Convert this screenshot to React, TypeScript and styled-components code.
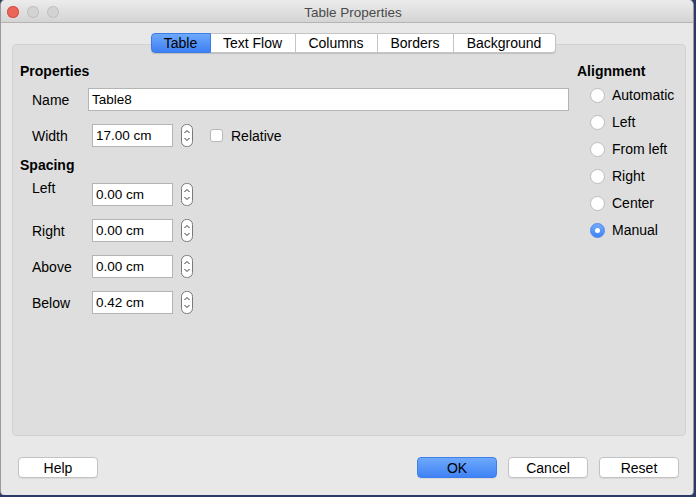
import styled, { createGlobalStyle, css } from "styled-components";

const GlobalStyle = createGlobalStyle`
    html, body {
        margin: 0;
        padding: 0;
        background: #2b3a68;
        font-family: "Liberation Sans", Arial, sans-serif;
        font-size: 14px;
        color: #000;
    }
`;

const Window = styled.div`
    width: 692px;
    height: 495px;
    margin-left: 1px;
    background: #e8e8e8;
    border-radius: 5px 5px 4px 4px;
    display: flex;
    flex-direction: column;
    overflow: hidden;
    box-shadow: 0 0 0 1px #9a9a9a;
`;

const TitleBar = styled.div`
    height: 23px;
    flex-shrink: 0;
    box-sizing: border-box;
    background: linear-gradient(#ececec, #d4d4d4);
    border-bottom: 1px solid #b4b4b4;
    display: flex;
    align-items: center;
    padding: 1px 0 0 6px;
`;

const Lights = styled.div`
    display: flex;
    gap: 8px;
`;

const Light = styled.span<{ $color: string; $edge: string }>`
    width: 12px;
    height: 12px;
    border-radius: 50%;
    background: ${(p) => p.$color};
    box-shadow: inset 0 0 0 1px ${(p) => p.$edge};
`;

const Title = styled.div`
    flex: 1;
    text-align: center;
    margin: 2px 46px 0 0;
    color: #4a4a4a;
    font-size: 13.5px;
`;

const Tabs = styled.div`
    display: flex;
    align-self: center;
    margin-top: 10px;
    margin-left: 12px;
    height: 20px;
    position: relative;
    z-index: 1;
    border-radius: 4px;
    box-shadow: 0 1px 1px rgba(0, 0, 0, 0.15);
`;

const Tab = styled.div<{ $active?: boolean; $width: number }>`
    width: ${(p) => p.$width}px;
    box-sizing: border-box;
    display: flex;
    align-items: center;
    justify-content: center;
    background: #fff;
    border: 1px solid #c4c4c4;
    border-left: none;
    &:first-child {
        border-left: 1px solid #c4c4c4;
        border-radius: 4px 0 0 4px;
    }
    &:last-child {
        border-radius: 0 4px 4px 0;
    }
    ${(p) =>
        p.$active &&
        css`
            background: linear-gradient(#6ea9fb, #3d80f4);
            border-color: #3d7bea !important;
        `}
`;

const Panel = styled.div`
    margin: -9px 7px 0 11px;
    height: 392px;
    box-sizing: border-box;
    background: #dedede;
    border: 1px solid #d2d2d2;
    border-radius: 4px;
    padding: 18px 0 0 7px;
    display: grid;
    grid-template-columns: 549px 1fr;
    column-gap: 8px;
`;

const Column = styled.div`
    display: flex;
    flex-direction: column;
`;

const Heading = styled.div<{ $mt?: number }>`
    font-weight: bold;
    line-height: 17px;
    margin-top: ${(p) => p.$mt ?? 0}px;
`;

const Row = styled.div<{ $mt: number }>`
    display: flex;
    align-items: center;
    margin-top: ${(p) => p.$mt}px;
    padding-left: 12px;
`;

const Label = styled.span<{ $width: number; $raise?: boolean }>`
    width: ${(p) => p.$width}px;
    flex-shrink: 0;
    ${(p) =>
        p.$raise &&
        css`
            align-self: flex-start;
            line-height: 10px;
        `}
`;

const Input = styled.div<{ $width?: number }>`
    height: 23px;
    box-sizing: border-box;
    ${(p) => (p.$width ? `width: ${p.$width}px;` : "flex: 1;")}
    background: #fff;
    border: 1px solid #b4b4b4;
    display: flex;
    align-items: center;
    padding-left: 3px;
    font-size: 13.5px;
`;

const SpinBox = styled.div`
    width: 12px;
    height: 23px;
    margin-left: 8px;
    display: flex;
`;

const Check = styled.span`
    width: 13px;
    height: 13px;
    box-sizing: border-box;
    background: #fff;
    border: 1px solid #b8b8b8;
    border-radius: 3px;
    margin: 0 8px 0 17px;
`;

const RadioList = styled.div`
    display: flex;
    flex-direction: column;
    gap: 11px;
    margin-top: 7px;
    padding-left: 13px;
`;

const RadioItem = styled.div`
    display: flex;
    align-items: center;
    gap: 7px;
    height: 16px;
`;

const Radio = styled.span<{ $checked?: boolean }>`
    width: 15px;
    height: 15px;
    box-sizing: border-box;
    border-radius: 50%;
    background: #fff;
    border: 1px solid #bdbdbd;
    display: flex;
    align-items: center;
    justify-content: center;
    ${(p) =>
        p.$checked &&
        css`
            background: linear-gradient(#74acfb, #3f82f5);
            border-color: #4a88f0;
            &::after {
                content: "";
                width: 5px;
                height: 5px;
                border-radius: 50%;
                background: #fff;
            }
        `}
`;

const Footer = styled.div`
    display: flex;
    padding: 21px 14px 0 17px;
    gap: 11px;
`;

const Button = styled.div<{ $primary?: boolean }>`
    width: 80px;
    height: 21px;
    box-sizing: border-box;
    display: flex;
    align-items: center;
    justify-content: center;
    background: #fff;
    border: 1px solid #c2c2c2;
    border-radius: 4px;
    box-shadow: 0 1px 0 rgba(0, 0, 0, 0.06);
    ${(p) =>
        p.$primary &&
        css`
            background: linear-gradient(#6ea9fb, #3f82f5);
            border-color: #3e7fec;
        `}
`;

const Spacer = styled.div`
    flex: 1;
`;

const Spinner = () => (
    <SpinBox>
        <svg width="12" height="23" viewBox="0 0 12 23">
            <rect x="0.5" y="0.5" width="11" height="22" rx="5" fill="#fff" stroke="#7a7a7a" />
            <path d="M3.5 9 L6 6.5 L8.5 9" fill="none" stroke="#333" strokeWidth="1" />
            <path d="M3.5 14 L6 16.5 L8.5 14" fill="none" stroke="#333" strokeWidth="1" />
        </svg>
    </SpinBox>
);

const spacing = [
    { label: "Left", value: "0.00 cm" },
    { label: "Right", value: "0.00 cm" },
    { label: "Above", value: "0.00 cm" },
    { label: "Below", value: "0.42 cm" },
];

const alignments = ["Automatic", "Left", "From left", "Right", "Center", "Manual"];

const tabs = [
    { name: "Table", width: 60 },
    { name: "Text Flow", width: 85 },
    { name: "Columns", width: 82 },
    { name: "Borders", width: 76 },
    { name: "Background", width: 102 },
];

const App = () => (
    <>
        <GlobalStyle />
        <Window>
            <TitleBar>
                <Lights>
                    <Light $color="#ec6559" $edge="#d6524a" />
                    <Light $color="#d3d3d3" $edge="#c2c2c2" />
                    <Light $color="#d3d3d3" $edge="#c2c2c2" />
                </Lights>
                <Title>Table Properties</Title>
            </TitleBar>
            <Tabs>
                {tabs.map((t, i) => (
                    <Tab key={t.name} $width={t.width} $active={i === 0}>
                        {t.name}
                    </Tab>
                ))}
            </Tabs>
            <Panel>
                <Column>
                    <Heading>Properties</Heading>
                    <Row $mt={8}>
                        <Label $width={56}>Name</Label>
                        <Input>Table8</Input>
                    </Row>
                    <Row $mt={13}>
                        <Label $width={60}>Width</Label>
                        <Input $width={81}>17.00 cm</Input>
                        <Spinner />
                        <Check />
                        <span>Relative</span>
                    </Row>
                    <Heading $mt={10}>Spacing</Heading>
                    {spacing.map((s, i) => (
                        <Row key={s.label} $mt={i === 0 ? 9 : 13}>
                            <Label $width={60} $raise={i === 0}>
                                {s.label}
                            </Label>
                            <Input $width={81}>{s.value}</Input>
                            <Spinner />
                        </Row>
                    ))}
                </Column>
                <Column>
                    <Heading>Alignment</Heading>
                    <RadioList>
                        {alignments.map((a) => (
                            <RadioItem key={a}>
                                <Radio $checked={a === "Manual"} />
                                {a}
                            </RadioItem>
                        ))}
                    </RadioList>
                </Column>
            </Panel>
            <Footer>
                <Button>Help</Button>
                <Spacer />
                <Button $primary>OK</Button>
                <Button>Cancel</Button>
                <Button>Reset</Button>
            </Footer>
        </Window>
    </>
);

export default App;
